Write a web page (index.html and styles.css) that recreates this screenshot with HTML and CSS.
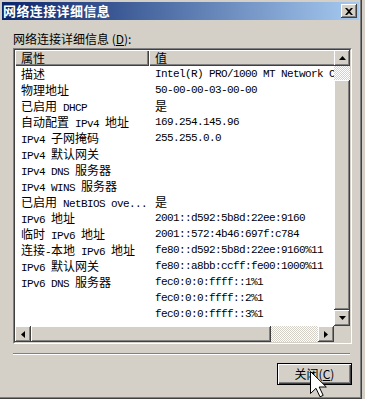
FILE: index.html
```html
<!DOCTYPE html>
<html lang="zh-CN">
<head>
<meta charset="utf-8">
<title>网络连接详细信息</title>
<link rel="stylesheet" href="styles.css">
</head>
<body>
<div class="window">
  <div class="titlebar">
    <span class="title">网络连接详细信息</span>
    <button class="xbtn" aria-label="关闭">
      <svg width="8" height="7" viewBox="0 0 8 7"><path d="M0 0h2l2 2 2-2h2L5 3.5 8 7H6L4 5 2 7H0l3-3.5z" fill="#000"/></svg>
    </button>
  </div>
  <div class="content">
    <div class="label">网络连接详细信息 (<u>D</u>):</div>
    <div class="listbox">
      <div class="listinner">
        <div class="toppart">
          <div class="view">
            <div class="header">
              <div class="hcell hprop"><span class="zh">属性</span></div>
              <div class="hcell hval"><span class="zh">值</span></div>
            </div>
            <div class="row"><div class="prop"><span class="zh">描述</span></div><div class="val">Intel(R) PRO/1000 MT Network Connection</div></div>
            <div class="row"><div class="prop"><span class="zh">物理地址</span></div><div class="val">50-00-00-03-00-00</div></div>
            <div class="row"><div class="prop"><span class="zh">已启用</span> DHCP</div><div class="val"><span class="zh">是</span></div></div>
            <div class="row"><div class="prop"><span class="zh">自动配置</span> IPv4 <span class="zh">地址</span></div><div class="val">169.254.145.96</div></div>
            <div class="row"><div class="prop">IPv4 <span class="zh">子网掩码</span></div><div class="val">255.255.0.0</div></div>
            <div class="row"><div class="prop">IPv4 <span class="zh">默认网关</span></div><div class="val"></div></div>
            <div class="row"><div class="prop">IPv4 DNS <span class="zh">服务器</span></div><div class="val"></div></div>
            <div class="row"><div class="prop">IPv4 WINS <span class="zh">服务器</span></div><div class="val"></div></div>
            <div class="row"><div class="prop"><span class="zh">已启用</span> NetBIOS ove...</div><div class="val"><span class="zh">是</span></div></div>
            <div class="row"><div class="prop">IPv6 <span class="zh">地址</span></div><div class="val">2001::d592:5b8d:22ee:9160</div></div>
            <div class="row"><div class="prop"><span class="zh">临时</span> IPv6 <span class="zh">地址</span></div><div class="val">2001::572:4b46:697f:c784</div></div>
            <div class="row"><div class="prop"><span class="zh">连接</span>-<span class="zh">本地</span> IPv6 <span class="zh">地址</span></div><div class="val">fe80::d592:5b8d:22ee:9160%11</div></div>
            <div class="row"><div class="prop">IPv6 <span class="zh">默认网关</span></div><div class="val">fe80::a8bb:ccff:fe00:1000%11</div></div>
            <div class="row"><div class="prop">IPv6 DNS <span class="zh">服务器</span></div><div class="val">fec0:0:0:ffff::1%1</div></div>
            <div class="row"><div class="prop"></div><div class="val">fec0:0:0:ffff::2%1</div></div>
            <div class="row"><div class="prop"></div><div class="val">fec0:0:0:ffff::3%1</div></div>
          </div>
          <div class="vscroll">
            <div class="sbtn"><svg width="7" height="4" viewBox="0 0 7 4"><path d="M3.5 0L7 4H0z" fill="#000"/></svg></div>
            <div class="vtrack"></div>
            <div class="thumb vthumb"></div>
            <div class="sbtn"><svg width="7" height="4" viewBox="0 0 7 4"><path d="M0 0h7L3.5 4z" fill="#000"/></svg></div>
          </div>
        </div>
        <div class="bottompart">
          <div class="hscroll">
            <div class="sbtn"><svg width="4" height="7" viewBox="0 0 4 7"><path d="M4 0v7L0 3.5z" fill="#000"/></svg></div>
            <div class="thumb hthumb"></div>
            <div class="htrack"></div>
            <div class="sbtn"><svg width="4" height="7" viewBox="0 0 4 7"><path d="M0 0l4 3.5L0 7z" fill="#000"/></svg></div>
          </div>
          <div class="corner"></div>
        </div>
      </div>
    </div>
    <div class="separator"></div>
    <div class="actions">
      <button class="btn">关闭(<u>C</u>)</button>
    </div>
  </div>
  <svg class="cursor" width="17" height="27" viewBox="0 0 17 27"><path d="M0.5 0.5V22.5L6 17.3L10 25.8L13.2 24.4L9.2 16H16.3Z" fill="#fff" stroke="#000" stroke-width="1"/></svg>
</div>
</body>
</html>
```

FILE: styles.css
```css
* { box-sizing: border-box; }
html, body { margin: 0; padding: 0; }
body {
  background: #d4d0c8;
  font-family: "Noto Sans CJK SC", sans-serif;
  font-size: 12px;
  color: #000;
  width: 365px;
  height: 399px;
  overflow: hidden;
}
.window {
  position: relative;
  width: 362px;
  height: 399px;
  background: #d4d0c8;
  box-shadow: inset -1px -1px #404040, inset -2px -2px #808080;
  padding-top: 2px;
}
.titlebar {
  margin: 0 3px 0 2px;
  height: 18px;
  display: flex;
  align-items: center;
  background: linear-gradient(to right, #0a246a, #a6caf0);
}
.title {
  color: #fff;
  font-weight: bold;
  font-size: 13px;
  letter-spacing: 0.4px;
  line-height: 18px;
  padding-left: 1px;
}
.xbtn {
  margin-left: auto;
  margin-right: 2px;
  width: 16px;
  height: 14px;
  padding: 0;
  border: 0;
  background: #d4d0c8;
  box-shadow: inset -1px -1px #404040, inset 1px 1px #fff, inset -2px -2px #808080;
  display: flex;
  align-items: center;
  justify-content: center;
}
.xbtn svg { display: block; }
.content {
  padding: 0 10px 0 13px;
  display: flex;
  flex-direction: column;
}
.label {
  margin-top: 12px;
  height: 14px;
  line-height: 14px;
}
.listbox {
  margin-top: 2px;
  width: 339px;
  height: 296px;
  border: 1px solid;
  border-color: #808080 #fff #fff #808080;
}
.listinner {
  width: 337px;
  height: 294px;
  border: 1px solid;
  border-color: #404040 #d4d0c8 #d4d0c8 #404040;
  background: #fff;
  display: flex;
  flex-direction: column;
}
.toppart {
  display: flex;
  height: 276px;
  flex: none;
}
.bottompart {
  display: flex;
  height: 16px;
  flex: none;
}
.view {
  width: 319px;
  height: 276px;
  flex: none;
  overflow: hidden;
  font-family: "Liberation Mono", monospace;
  font-size: 11px;
  letter-spacing: -0.6px;
  white-space: nowrap;
}
.zh {
  font-family: "Noto Sans CJK SC", sans-serif;
  font-size: 12px;
  letter-spacing: 0;
}
.header { display: flex; height: 16px; }
.hcell {
  height: 16px;
  line-height: 15px;
  background: #d4d0c8;
  box-shadow: inset 1px 1px #fff, inset -1px -1px #404040, inset -2px -2px #808080;
  padding-left: 6px;
  flex: none;
}
.hprop { width: 134px; }
.hval { width: 200px; }
.row { display: flex; height: 16px; line-height: 16px; }
.prop { width: 134px; flex: none; padding-left: 6px; overflow: hidden; }
.val { flex: none; padding-left: 6px; }
.vscroll {
  width: 16px;
  flex: none;
  display: flex;
  flex-direction: column;
}
.hscroll {
  width: 319px;
  flex: none;
  display: flex;
}
.sbtn {
  width: 16px;
  height: 16px;
  flex: none;
  background: #d4d0c8;
  box-shadow: inset -1px -1px #404040, inset 1px 1px #fff, inset -2px -2px #808080;
  display: flex;
  align-items: center;
  justify-content: center;
}
.sbtn svg { display: block; }
.thumb {
  background: #d4d0c8;
  box-shadow: inset -1px -1px #404040, inset 1px 1px #fff, inset -2px -2px #808080;
}
.vtrack, .htrack {
  background: repeating-conic-gradient(#d4d0c8 0 25%, #fff 0 50%) 0 0 / 2px 2px;
}
.vtrack { height: 14px; flex: none; }
.vthumb { flex: 1; }
.hthumb { width: 240px; flex: none; }
.htrack { flex: 1; }
.corner { width: 16px; flex: none; background: #d4d0c8; }
.separator {
  margin-top: 9px;
  margin-right: 2px;
  height: 2px;
  border-top: 1px solid #808080;
  border-bottom: 1px solid #fff;
}
.actions {
  display: flex;
  justify-content: flex-end;
  margin-top: 8px;
}
.btn {
  width: 75px;
  height: 22px;
  padding: 0;
  border: 1px solid #000;
  background: #d4d0c8;
  box-shadow: inset 1px 1px #fff, inset -1px -1px #404040, inset -2px -2px #808080;
  font-family: "Noto Sans CJK SC", sans-serif;
  font-size: 12px;
  color: #000;
  line-height: 18px;
}
.cursor {
  position: absolute;
  left: 310px;
  top: 371px;
}
```
